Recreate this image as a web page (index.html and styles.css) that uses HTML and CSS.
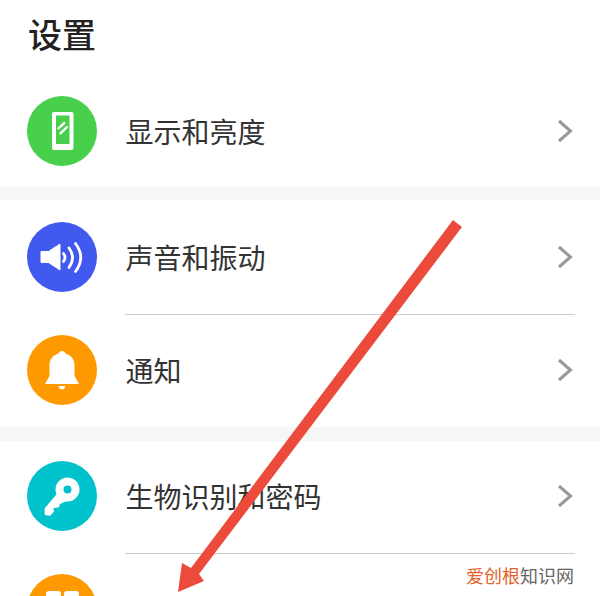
FILE: index.html
```html
<!DOCTYPE html>
<html lang="zh-CN">
<head>
<meta charset="utf-8"/>
<title>设置</title>
<link rel="stylesheet" href="styles.css">
</head>
<body>
<div class="page">
	<h1 class="title">设置</h1>

	<div class="row row-short">
		<svg class="icon" viewBox="0 0 70 70">
			<circle cx="35" cy="35" r="35" fill="#48cf4c"/>
			<path fill-rule="evenodd" d="M27 16H44.500Q46.500 16 46.500 18V52Q46.500 54 44.500 54H27Q25 54 25 52V18Q25 16 27 16ZM29 19.500V48H42.500V19.500Z" fill="#fff"/>
			<path d="M31.500 32.300 37.300 27M33.500 37.300 40 31" stroke="#fff" stroke-width="2.400" stroke-linecap="round"/>
		</svg>
		<span class="label">显示和亮度</span>
		<svg class="chevron" viewBox="0 0 16 24"><path d="M2 2 13.500 12 2 22" fill="none" stroke="#999" stroke-width="3"/></svg>
	</div>
	<div class="band band-small"></div>

	<div class="row row-top">
		<svg class="icon" viewBox="0 0 70 70">
			<circle cx="35" cy="35" r="35" fill="#4159ee"/>
			<path d="M14 29.500H21.500L33 22V48L21.500 40.500H14Z" fill="#fff" stroke="#fff" stroke-linejoin="round"/>
			<path d="M36.500 31.500Q39.500 35.500 36.500 39.500M42 26Q49 35.500 42 45.500M48.500 21.500Q59 35.500 48.500 49.500" fill="none" stroke="#fff" stroke-width="2.800" stroke-linecap="round"/>
		</svg>
		<span class="label">声音和振动</span>
		<svg class="chevron" viewBox="0 0 16 24"><path d="M2 2 13.500 12 2 22" fill="none" stroke="#999" stroke-width="3"/></svg>
	</div>
	<div class="divider"></div>
	<div class="row">
		<svg class="icon" viewBox="0 0 70 70">
			<circle cx="35" cy="35" r="35" fill="#ff9900"/>
			<path d="M35 16C37 16 38 17 38.500 18.500C44 20 47.500 24.500 47.500 30V41L52 49H18L22.500 41V30C22.500 24.500 26 20 31.500 18.500C32 17 33 16 35 16Z" fill="#fff"/>
			<path d="M31.500 51H38.500C38 53.500 36.500 54.500 35 54.500S32 53.500 31.500 51Z" fill="#fff"/>
		</svg>
		<span class="label">通知</span>
		<svg class="chevron" viewBox="0 0 16 24"><path d="M2 2 13.500 12 2 22" fill="none" stroke="#999" stroke-width="3"/></svg>
	</div>
	<div class="band"></div>

	<div class="row">
		<svg class="icon" viewBox="0 0 70 70">
			<circle cx="35" cy="35" r="35" fill="#00c2cc"/>
			<circle cx="40.500" cy="28.500" r="8" fill="none" stroke="#fff" stroke-width="8"/>
			<path d="M30.400 32.300 17.700 47.300V54L23 54.700 27 50.700 26.400 47.300 32 46.300 33 43 42 39Z" fill="#fff"/>
		</svg>
		<span class="label">生物识别和密码</span>
		<svg class="chevron" viewBox="0 0 16 24"><path d="M2 2 13.500 12 2 22" fill="none" stroke="#999" stroke-width="3"/></svg>
	</div>
	<div class="divider"></div>
	<div class="row">
		<svg class="icon" viewBox="0 0 70 70">
			<circle cx="35" cy="35" r="35" fill="#ff9900"/>
			<rect x="19" y="17" width="15" height="15" rx="3" fill="#fff"/>
			<rect x="37" y="17" width="15" height="15" rx="3" fill="#fff"/>
		</svg>
	</div>
</div>

<svg class="arrow" viewBox="0 0 600 596">
	<path d="M453 220 462 227 199 574 204 581 178 592 182 563 191 568Z" fill="#ec4a3b"/>
</svg>
<div class="mark"><span class="mark-hot">爱创根</span>知识网</div>
</body>
</html>
```

FILE: styles.css
```css
html,
body {
	margin:0;
	height:596px;
	overflow:hidden;
	background:#fff;
}
body {
	position:relative;
	color:#333;
	font:400 28px/40px "Noto Sans CJK SC", sans-serif;
}
.page {
	height:596px;
	overflow:hidden;
}
.title {
	margin:0;
	height:76px;
	padding-left:28px;
	box-sizing:border-box;
	color:#222;
	font:500 34px/68px "Noto Sans CJK SC", sans-serif;
}
.row {
	display:flex;
	align-items:center;
	padding:20px 27px 22px 26.5px;
}
.row-short {
	padding-bottom:21px;
}
.row-top {
	padding-top:22px;
}
.icon {
	flex:none;
	width:70px;
	height:70px;
}
.label {
	flex:1;
	margin-left:29px;
}
.chevron {
	flex:none;
	width:16px;
	height:24px;
}
.divider {
	height:1px;
	margin:0 25px 0 125px;
	background:#ccc;
}
.band {
	height:14px;
	background:#f6f6f6;
}
.band-small {
	height:13px;
}
.arrow {
	position:absolute;
	top:0;
	left:0;
	width:600px;
	height:596px;
}
.mark {
	position:absolute;
	right:26px;
	bottom:9px;
	color:#666;
	font:400 18px/24px "Noto Sans CJK SC", sans-serif;
}
.mark-hot {
	color:#e2622a;
}
```
